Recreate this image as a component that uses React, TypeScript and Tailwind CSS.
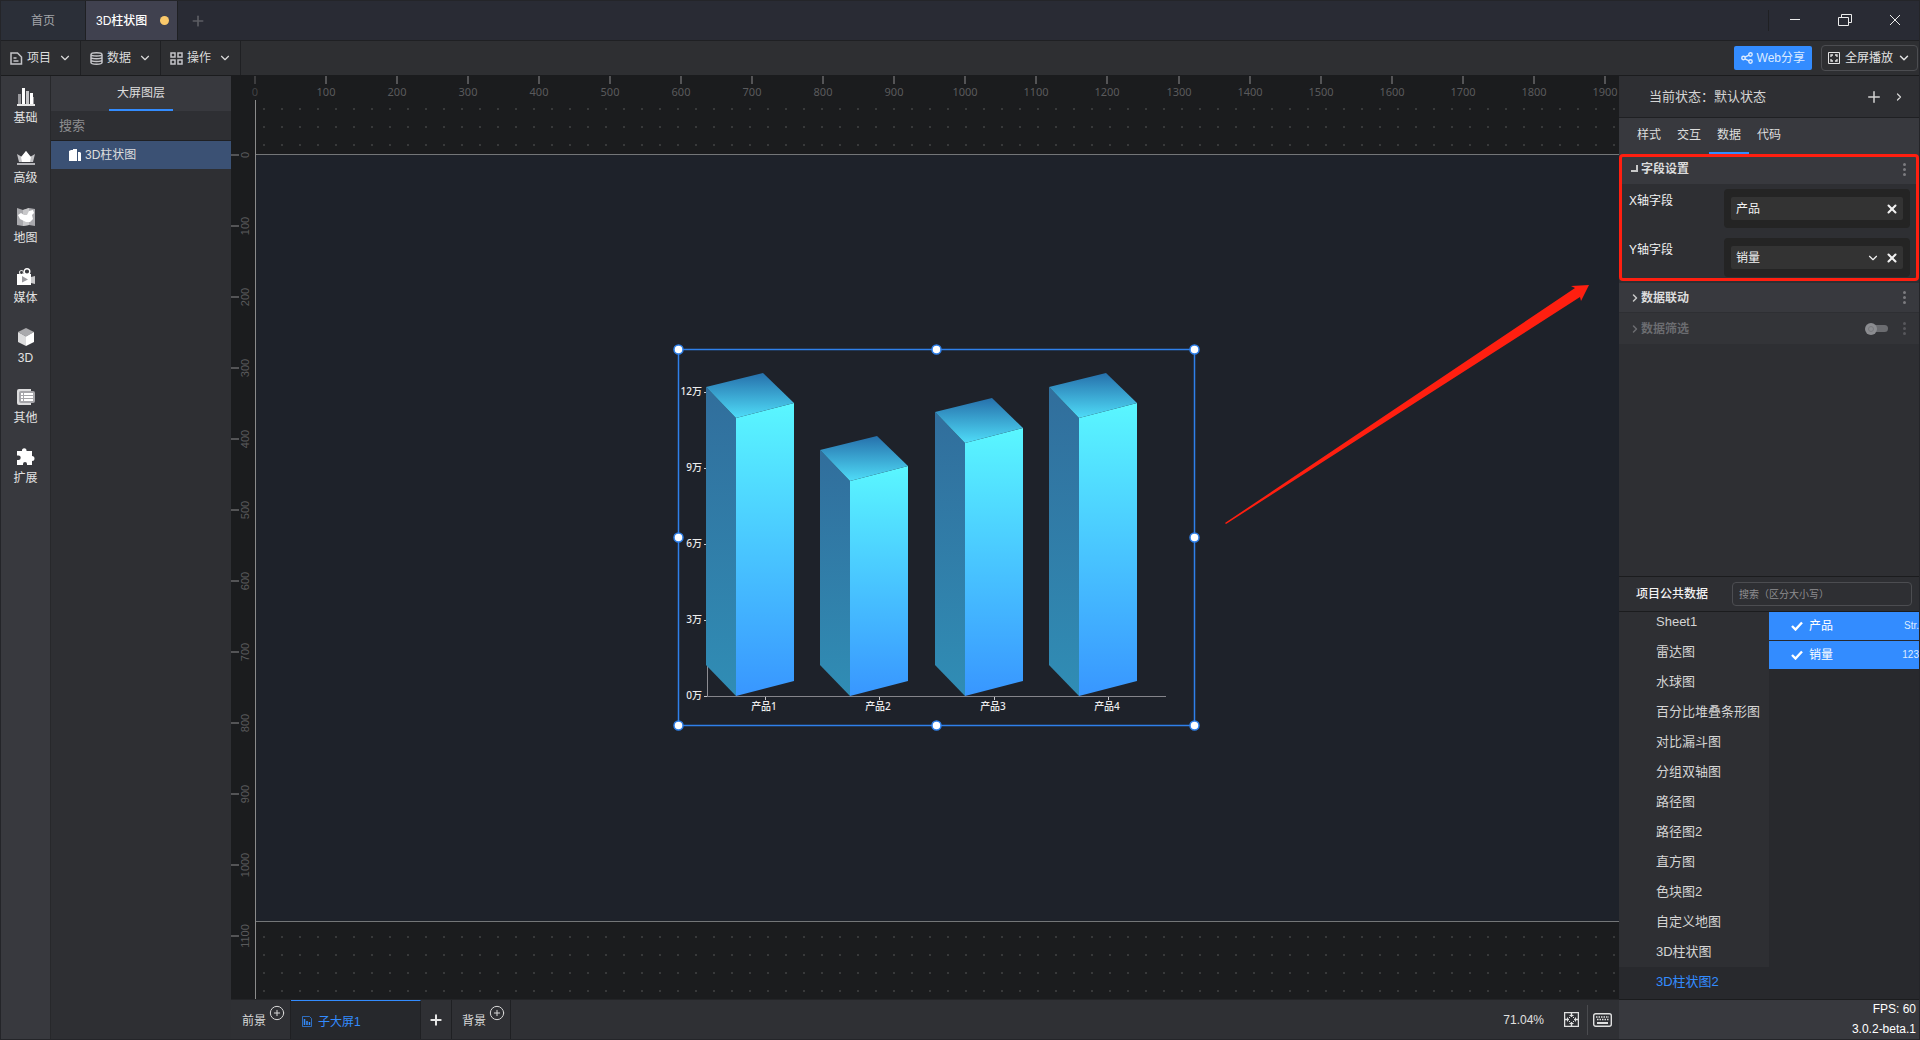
import type { ReactNode } from "react";
import { ChevronDown, ChevronRight, CirclePlus, Plus, X } from "lucide-react";

// screen px per canvas px at 71.04% zoom
const SCALE = 0.7104;

const sheets = [
  "Sheet1",
  "雷达图",
  "水球图",
  "百分比堆叠条形图",
  "对比漏斗图",
  "分组双轴图",
  "路径图",
  "路径图2",
  "直方图",
  "色块图2",
  "自定义地图",
  "3D柱状图",
  "3D柱状图2",
];

const fields = [
  { name: "产品", type: "Str." },
  { name: "销量", type: "123" },
];

const railItems: { label: string; icon: ReactNode }[] = [
  {
    label: "基础",
    icon: (
      <>
        <path d="M1 6h3v10H1z" fill="#98989c" />
        <path d="M5 0h3v16H5zM13 5h3v11h-3z" fill="#fff" />
        <path d="M9 3h3v13H9z" fill="#c4c4c7" />
        <path d="M16 9h1v7h-1z" fill="#98989c" />
        <path d="M0 16h18v2H0z" fill="#e6e6e6" />
      </>
    ),
  },
  {
    label: "高级",
    icon: (
      <>
        <path d="M0 6l5 3 4-6 4 6 5-3-2 8H2z" fill="#c2c2c5" />
        <path d="M9 3l5 6-1 5H5L4 9z" fill="#fff" />
        <path d="M0 15h18v2H0z" fill="#b4b4b8" />
      </>
    ),
  },
  {
    label: "地图",
    icon: (
      <>
        <path d="M0 0l6 2 6-2 6 1v17l-6-1-6 1-6-1z" fill="#a9a9ad" />
        <path d="M6 2l6-2v17l-6 1z" fill="#c8c8ca" />
        <path d="M1 7l3-2 3 2h3l2-4 4-1 1 3-2 2 1 4-3 3H9l-2-1-4-2z" fill="#fff" />
      </>
    ),
  },
  {
    label: "媒体",
    icon: (
      <>
        <circle cx="10" cy="3.5" r="2.8" fill="none" stroke="#fff" strokeWidth="1.4" />
        <circle cx="4.5" cy="4.5" r="2" fill="none" stroke="#ddd" strokeWidth="1.2" />
        <path d="M0 6h14v11H0z" fill="#fff" />
        <path d="M14 9l4-1v8l-4-1z" fill="#c8c8ca" />
        <path d="M5 8l6 3.5-6 3z" fill="#9a9a9f" />
      </>
    ),
  },
  {
    label: "3D",
    icon: (
      <>
        <path d="M9 0l8 4-8 4.500L1 4z" fill="#aaaaad" />
        <path d="M1 4l8 4.500V18l-8-4z" fill="#dcdcdd" />
        <path d="M17 4L9 8.500V18l8-4z" fill="#fff" />
      </>
    ),
  },
  {
    label: "其他",
    icon: (
      <>
        <path d="M2 1h12v16H2a2 2 0 0 1-2-2V3a2 2 0 0 1 2-2z" fill="#dcdcdd" />
        <rect x="2" y="3" width="16" height="12" rx="2" fill="#a5a5a9" />
        <path d="M4 5h2v2H4zM7 5h9v2H7zM4 8h2v2H4zM7 8h9v2H7zM4 11h2v2H4zM7 11h9v2H7z" fill="#fff" />
      </>
    ),
  },
  {
    label: "扩展",
    icon: (
      <path
        d="M0 3h5a2.300 2.300 0 1 1 4.500 0H15v5a2.300 2.300 0 1 1 0 5v4h-5v-1a1.900 1.900 0 0 0-4 0v1H0v-5h1.500a2.200 2.200 0 0 0 0-4.400H0z"
        fill="#fff"
      />
    ),
  },
];

const menus: { label: string; icon: ReactNode }[] = [
  { label: "项目", icon: <path d="M1 1h6.500L11.500 5v7H1zM3.500 6h3M3.500 9h5" /> },
  {
    label: "数据",
    icon: (
      <path d="M1 2.500c0-2.300 11-2.300 11 0v8c0 2.300-11 2.300-11 0zM1 2.500c0 2 11 2 11 0M1 5.200c0 2 11 2 11 0M1 8c0 2 11 2 11 0" />
    ),
  },
  { label: "操作", icon: <path d="M1 1h4v4H1zM8 1h4v4H8zM1 8h4v4H1zM8 8h4v4H8z" /> },
];

function TitleBar() {
  return (
    <header className="flex h-10 shrink-0 border-b border-[#1f2023] bg-[#292b34]">
      <button className="w-[85px] border-r border-[#1f2023] bg-[#2b2f38] text-xs text-[#a3a5a9]">首页</button>
      <button className="flex w-[92px] items-center justify-between border-r border-[#1f2023] bg-[#40414f] pr-2 pl-[10px] text-xs font-medium text-white">
        3D柱状图
        <span className="size-[9px] rounded-full bg-[#fbc96b]" />
      </button>
      <button aria-label="新建" className="px-3 text-[#5c5d63]">
        <Plus className="size-4" strokeWidth={2.5} />
      </button>
      <div className="my-[9px] ml-auto border-l border-[#1f2023]" />
      <div className="flex items-center gap-5 pr-[9px] pb-0.5 pl-[11px] text-[#ececec]">
        <button aria-label="最小化" className="flex size-[30px] items-center justify-center">
          <svg width="12" height="12" stroke="currentColor" fill="none">
            <path d="M1 5.500h10" />
          </svg>
        </button>
        <button aria-label="还原" className="flex size-[30px] items-center justify-center">
          <svg width="14" height="12" stroke="currentColor" fill="none">
            <path d="M.5 3.500h10v8H.5zM3.500 3.500v-3h10v8h-3" />
          </svg>
        </button>
        <button aria-label="关闭" className="flex size-[30px] items-center justify-center">
          <svg width="12" height="12" stroke="currentColor" fill="none">
            <path d="M1 1l10 10M11 1L1 11" />
          </svg>
        </button>
      </div>
    </header>
  );
}

function Toolbar() {
  return (
    <div className="flex h-[35px] shrink-0 border-b border-[#1b1c1e] bg-[#2e2f32]">
      {menus.map((menu) => (
        <button
          key={menu.label}
          className="flex w-20 items-center border-r border-[#1f2023] pl-[9px] text-xs text-[#dcdcdc]"
        >
          <svg width="13" height="13" fill="none" stroke="#c4c4c8" strokeWidth="1.5">
            {menu.icon}
          </svg>
          <span className="ml-1">{menu.label}</span>
          <ChevronDown className="ml-[7px] size-3.5" strokeWidth={2} />
        </button>
      ))}
      <div className="ml-auto flex items-center gap-[9px] pr-px">
        <button className="flex h-6 items-center gap-1 rounded-xs bg-[#338cff] px-[7px] text-xs text-[#dcebff]">
          <svg width="12" height="12" fill="none" stroke="currentColor" strokeWidth="1.4">
            <circle cx="2.5" cy="6" r="1.7" />
            <circle cx="9.5" cy="2.5" r="1.7" />
            <circle cx="9.5" cy="9.5" r="1.7" />
            <path d="M4 5.200l4-2M4 6.800l4 2" />
          </svg>
          Web分享
        </button>
        <button className="flex h-[26px] items-center rounded-sm border border-[#4c4d51] px-1.5 text-xs text-[#e4e4e4]">
          <svg width="12" height="12" fill="none" stroke="currentColor">
            <path d="M.5.500h11v11H.5z" />
            <path d="M3 5V3h2M7 3h2v2M9 7v2H7M5 9H3V7" strokeWidth="1.3" />
          </svg>
          <span className="ml-[5px]">全屏播放</span>
          <ChevronDown className="ml-1 size-3.5" strokeWidth={2.5} />
        </button>
      </div>
    </div>
  );
}

function Rail() {
  return (
    <nav className="flex w-[50px] shrink-0 flex-col border-r border-[#27282b] bg-[#38393e]">
      {railItems.map((item) => (
        <button key={item.label} className="flex h-[60px] flex-col items-center pt-3 text-xs text-[#e2e2e2]">
          <svg width="18" height="18">
            {item.icon}
          </svg>
          <span className="mt-[3px] leading-[18px]">{item.label}</span>
        </button>
      ))}
    </nav>
  );
}

function LayerPanel() {
  return (
    <aside className="w-[180px] shrink-0 bg-[#2e2f33] text-xs">
      <div className="flex h-[35px] justify-center bg-[#38393e]">
        <button className="border-b-2 border-[#338cff] px-2 text-[#dedede]">大屏图层</button>
      </div>
      <input
        aria-label="搜索图层"
        placeholder="搜索"
        className="block h-[30px] w-full border-b border-[#1f2023] px-2 text-[13px] outline-none placeholder:text-[#8d8d90]"
      />
      <button className="flex h-7 w-full items-center gap-1 bg-[#3b5174] pl-[18px] text-[#dedede]">
        <svg width="12" height="12">
          <path d="M0 2l2-1h2v11H0zM4 0h4v12H4zM9 3h2l1 1v8H9z" fill="#fff" />
        </svg>
        3D柱状图
      </button>
    </aside>
  );
}

function Rulers() {
  const marks = Array.from({ length: 20 }, (_, i) => i);
  return (
    <>
      <div />
      <svg className="h-6 w-full overflow-visible font-['Noto_Sans',sans-serif] text-[11px]">
        {marks.map((i) => (
          <g key={i} opacity={i === 0 ? 0.6 : 1}>
            <rect x={Math.round(i * 100 * SCALE) - 1} width="2" height="8" fill="#545456" />
            <text x={Math.round(i * 100 * SCALE)} y="20" textAnchor="middle" fill="#5a5a5c">
              {i * 100}
            </text>
          </g>
        ))}
      </svg>
      <svg className="h-full w-6 text-[11px]">
        {marks.slice(0, 12).map((i) => (
          <g key={i} transform={`translate(0 ${Math.round(54 + i * 100 * SCALE)})`}>
            <rect width="8" height="2" fill="#545456" />
            <text transform="translate(18 1) rotate(-90)" textAnchor="middle" fill="#5a5a5c">
              {i * 100}
            </text>
          </g>
        ))}
      </svg>
    </>
  );
}

// One column of the chart; `top` is the highest point of its lid
function Column({ x, top }: { x: number; top: number }) {
  const front = x + 30;
  const right = x + 88;
  return (
    <g>
      <path d={`M${x} ${top + 14}L${front} ${top + 45}V347L${x} 316z`} fill="url(#side)" />
      <path d={`M${front} ${top + 45}L${right} ${top + 30}V332L${front} 347z`} fill="url(#front)" />
      <path d={`M${x} ${top + 14}L${x + 57} ${top}L${right} ${top + 30}L${front} ${top + 45}z`} fill="url(#lid)" />
    </g>
  );
}

function ColumnChart() {
  const columns = [
    { name: "产品1", x: 28, top: 24 },
    { name: "产品2", x: 142, top: 87 },
    { name: "产品3", x: 257, top: 49 },
    { name: "产品4", x: 371, top: 24 },
  ];
  const ticks = ["12万", "9万", "6万", "3万", "0万"];
  const handles = [0, 188, 376].flatMap((y) => [0, 258, 516].map((x) => ({ x, y })));
  return (
    <svg
      width="518"
      height="377"
      className="absolute top-[194px] left-[422px] overflow-visible font-['Noto_Sans','Noto_Sans_CJK_SC',sans-serif] text-[10px] font-medium"
    >
      <defs>
        <linearGradient id="front" x2="0" y2="1">
          <stop offset="0" stopColor="#5af7ff" />
          <stop offset="0.5" stopColor="#49c6ff" />
          <stop offset="1" stopColor="#3896ff" />
        </linearGradient>
        <linearGradient id="side" x2="0" y2="1">
          <stop offset="0" stopColor="#316e9c" />
          <stop offset="1" stopColor="#308db5" />
        </linearGradient>
        <linearGradient id="lid" x2="0" y2="1">
          <stop offset="0" stopColor="#2670ab" />
          <stop offset="1" stopColor="#4fdcf8" />
        </linearGradient>
      </defs>
      <path d="M29.500 43V347" stroke="#8c8c92" />
      {ticks.map((tick, i) => (
        <g key={tick}>
          <path d={`M26 ${43 + i * 76}.5h3`} stroke="#c8c8cc" />
          <text x="24" y={46 + i * 76} textAnchor="end" fill="#ececec">
            {tick}
          </text>
        </g>
      ))}
      <path d="M29 347.500H488" stroke="#85858b" />
      {columns.map((c) => (
        <g key={c.name}>
          <Column x={c.x} top={c.top} />
          <path d={`M${c.x + 59}.5 348v3`} stroke="#c8c8cc" />
          <text x={c.x + 58} y="361" textAnchor="middle" fill="#ececec">
            {c.name}
          </text>
        </g>
      ))}
      <path d="M.5.500h516v376H.5z" fill="none" stroke="#2f80ea" strokeWidth="1.5" />
      {handles
        .filter((h) => h.x !== 258 || h.y !== 188)
        .map((h) => (
          <circle key={`${h.x}-${h.y}`} cx={h.x + 0.5} cy={h.y + 0.5} r="4.5" fill="#fff" stroke="#2f80ea" strokeWidth="1.5" />
        ))}
    </svg>
  );
}

function Workspace() {
  return (
    <div className="relative overflow-hidden border-l border-[#8a8a8a]">
      <svg className="absolute size-full">
        <pattern id="dots" width="18" height="18" patternUnits="userSpaceOnUse">
          <rect x="7" y="8" width="2" height="2" fill="#38393a" />
        </pattern>
        <rect width="100%" height="100%" fill="url(#dots)" />
      </svg>
      <div className="relative mt-[54px] h-[768px] border-y border-[#747678] bg-[#1e222a]">
        <ColumnChart />
        <svg width="368" height="242" className="absolute top-[129px] left-[969px]">
          <path d="M0 239L350 4L346 2L364 1L356 17L355 13L1 240z" fill="#ff1f10" />
        </svg>
      </div>
    </div>
  );
}

function ScreenTabs() {
  const tab = "flex w-[59px] border-r border-[#1f2023] pl-[10px] text-[#d8d8d8]";
  return (
    <footer className="flex h-10 shrink-0 border-t border-[#232427] bg-[#2f3034] pl-px text-xs">
      <button className={tab}>
        <span className="mt-3 leading-[18px]">前景</span>
        <CirclePlus className="mt-[5px] ml-[3px] size-4" strokeWidth={1.5} />
      </button>
      <button className="flex w-[130px] items-center border-t border-r border-t-[#338cff] border-r-[#1f2023] bg-[#26282c] pt-[3px] pl-[11px] text-[#338cff]">
        <svg width="10" height="11" fill="none" stroke="currentColor">
          <path d="M.5.500h7l2 2v8h-9z" opacity="0.7" />
          <path d="M2.500 3v6M5 5v4M7.500 6v3" strokeWidth="1.5" />
        </svg>
        <span className="ml-[6px]">子大屏1</span>
      </button>
      <button
        aria-label="新增子大屏"
        className="flex w-[31px] items-center justify-center border-r border-[#1f2023] text-[#e6e6e6]"
      >
        <Plus className="size-4" strokeWidth={3} />
      </button>
      <button className={tab}>
        <span className="mt-3 leading-[18px]">背景</span>
        <CirclePlus className="mt-[5px] ml-[3px] size-4" strokeWidth={1.5} />
      </button>
      <div className="ml-auto flex items-center pr-[7px] text-[#e0e0e0]">
        <span>71.04%</span>
        <button aria-label="适应屏幕" className="mr-2 ml-5">
          <svg width="15" height="15" fill="none" stroke="currentColor">
            <path d="M.5.500h14v14H.5z" strokeWidth="1.5" />
            <path d="M7.500 1v4M7.500 10v4M1 7.500h4M10 7.500h4" strokeWidth="1.5" />
            <path d="M5.500 3.500h4M5.500 11.500h4M3.500 5.500v4M11.500 5.500v4M5 5l1 1M10 5l-1 1M5 10l1-1M10 10l-1-1" />
          </svg>
        </button>
        <div className="h-[30px] border-l border-[#4a4b4f]" />
        <button aria-label="快捷键" className="ml-[5px]">
          <svg width="19" height="14" fill="none" stroke="currentColor">
            <rect x="0.7" y="0.7" width="17.6" height="12.6" rx="2" strokeWidth="1.4" />
            <path d="M3 4h13M4 6.500h12" strokeWidth="1.5" strokeDasharray="1.5 1" />
            <path d="M4 10h11" strokeWidth="2" />
          </svg>
        </button>
      </div>
    </footer>
  );
}

function MoreDots() {
  return (
    <button aria-label="更多" className="flex w-4 flex-col items-center gap-0.5 text-[#7b7b7f]">
      <span className="size-[3px] rounded-full bg-current" />
      <span className="size-[3px] rounded-full bg-current" />
      <span className="size-[3px] rounded-full bg-current" />
    </button>
  );
}

function FieldSettings() {
  const box = "w-[186px] rounded-sm bg-[#242424] px-[7px] py-2";
  const chip = "flex h-[23px] items-center rounded-xs bg-[#333] pr-1 pl-[5px]";
  return (
    <section className="relative text-xs">
      <div className="flex h-[30px] items-center bg-[#38393e] pr-[7px] pl-3">
        <svg width="8" height="8" fill="none" stroke="#c8c8c8" strokeWidth="2">
          <path d="M6 0v6H0" />
        </svg>
        <h3 className="ml-0.5 flex-1 font-bold text-[#dcdcdc]">字段设置</h3>
        <MoreDots />
      </div>
      <div className="flex flex-col gap-[10px] pt-[5px] pr-[9px] pb-[6px] pl-[10px] text-[#f2f2f2]">
        <div className="flex justify-between">
          <span className="mt-[3px] leading-[18px]">X轴字段</span>
          <div className={box}>
            <div className={chip}>
              <span className="flex-1">产品</span>
              <button aria-label="移除产品">
                <X className="size-3.5" strokeWidth={3.5} />
              </button>
            </div>
          </div>
        </div>
        <div className="flex justify-between">
          <label htmlFor="y-field" className="mt-[3px] leading-[18px]">
            Y轴字段
          </label>
          <div className={box}>
            <div className={chip}>
              <select id="y-field" className="flex-1 appearance-none bg-transparent outline-none">
                <option>销量</option>
              </select>
              <ChevronDown className="mr-[5px] size-3.5" />
              <button aria-label="移除销量">
                <X className="size-3.5" strokeWidth={3.5} />
              </button>
            </div>
          </div>
        </div>
      </div>
      <div className="pointer-events-none absolute inset-x-0 top-0 bottom-0.5 rounded-sm border-3 border-[#ff1f10]" />
    </section>
  );
}

function DataPanel() {
  return (
    <section className="shrink-0 border-t border-[#1b1c1e]">
      <div className="flex h-[35px] items-center justify-between border-b border-[#1b1c1e] pr-[7px] pl-[17px]">
        <h3 className="text-xs font-medium text-[#f2f2f2]">项目公共数据</h3>
        <input
          aria-label="搜索数据"
          placeholder="搜索（区分大小写）"
          className="h-6 w-[180px] rounded-sm border border-[#4c4d51] px-[6px] text-[10px] outline-none placeholder:text-[#8d8d90]"
        />
      </div>
      <div className="flex h-[387px] overflow-hidden bg-[#28292d]">
        <ul className="-mt-[5px] w-[150px] text-[13px]">
          {sheets.map((sheet) => (
            <li key={sheet}>
              <button
                className={
                  sheet === "3D柱状图2"
                    ? "h-[30px] w-full bg-[#28292d] pl-[37px] text-left text-[#338cff]"
                    : "h-[30px] w-full bg-[#2e2f33] pl-[37px] text-left whitespace-nowrap text-[#d4d4d4]"
                }
              >
                {sheet}
              </button>
            </li>
          ))}
        </ul>
        <ul className="flex-1 text-xs text-white">
          {fields.map((field) => (
            <li key={field.name} className="border-b border-[#28292d]">
              <button className="flex h-7 w-full items-center bg-[#338cff] pl-[22px]">
                <svg width="12" height="10" fill="none" stroke="currentColor" strokeWidth="2.4">
                  <path d="M1 5l3.500 3.500L11 1.500" />
                </svg>
                <span className="ml-[6px] flex-1 text-left">{field.name}</span>
                <span className="text-[10px] text-[#dcebff]">{field.type}</span>
              </button>
            </li>
          ))}
        </ul>
      </div>
    </section>
  );
}

function PropertyPanel() {
  const tabs = ["样式", "交互", "数据", "代码"];
  return (
    <aside className="flex w-[300px] shrink-0 flex-col bg-[#2e2f33] text-xs">
      <div className="flex h-[42px] shrink-0 items-center border-b border-[#1f2023] pr-[14px] pl-[30px] text-[13px] text-[#d4d4d4]">
        <span className="flex-1">当前状态：默认状态</span>
        <button aria-label="新增状态">
          <Plus className="size-[18px]" strokeWidth={2} />
        </button>
        <button aria-label="展开状态" className="ml-2.5">
          <ChevronRight className="size-3" strokeWidth={2.5} />
        </button>
      </div>
      <div className="flex h-9 shrink-0 bg-[#38393e] pl-[10px] text-[#dedede]">
        {tabs.map((tab) => (
          <button
            key={tab}
            className={
              tab === "数据" ? "w-10 border-b-2 border-[#338cff]" : "w-10 border-b-2 border-transparent"
            }
          >
            {tab}
          </button>
        ))}
      </div>
      <FieldSettings />
      <div className="flex h-[30px] items-center border-b border-[#2e2f33] bg-[#38393e] pr-[7px] pl-[10px]">
        <ChevronRight className="size-3 text-[#c8c8c8]" strokeWidth={3} />
        <h3 className="flex-1 font-bold text-[#dcdcdc]">数据联动</h3>
        <MoreDots />
      </div>
      <div className="flex h-[31px] items-center bg-[#333438] pr-[7px] pl-[10px] text-[#6b6c70]">
        <ChevronRight className="size-3" strokeWidth={3} />
        <h3 className="flex-1 font-bold">数据筛选</h3>
        <label className="relative mr-2 flex h-3 w-[23px] items-center">
          <input type="checkbox" role="switch" aria-label="启用数据筛选" className="sr-only" />
          <span className="ml-1 h-[7px] w-full rounded-full bg-[#6b6c70]" />
          <span className="absolute left-0 flex size-3 items-center justify-center rounded-full bg-[#8b8c90]">
            <span className="size-1.5 rounded-full border border-[#77787c]" />
          </span>
        </label>
        <div className="opacity-50">
          <MoreDots />
        </div>
      </div>
      <div className="flex-1" />
      <DataPanel />
      <div className="flex h-10 shrink-0 flex-col items-end border-t border-[#1b1c1e] bg-[#38393e] pr-[3px] leading-5 text-white">
        <span className="-mt-px">FPS: 60</span>
        <span>3.0.2-beta.1</span>
      </div>
    </aside>
  );
}

export default function App() {
  return (
    <div className="flex h-screen flex-col overflow-hidden border border-[#242529] font-['Liberation_Sans','Noto_Sans_CJK_SC',sans-serif] select-none">
      <TitleBar />
      <Toolbar />
      <div className="flex min-h-0 flex-1">
        <Rail />
        <LayerPanel />
        <main className="flex min-w-0 flex-1 flex-col">
          <div className="grid min-h-0 flex-1 grid-cols-[24px_1fr] grid-rows-[24px_1fr] overflow-hidden bg-[#1b1c1e]">
            <Rulers />
            <Workspace />
          </div>
          <ScreenTabs />
        </main>
        <PropertyPanel />
      </div>
    </div>
  );
}
